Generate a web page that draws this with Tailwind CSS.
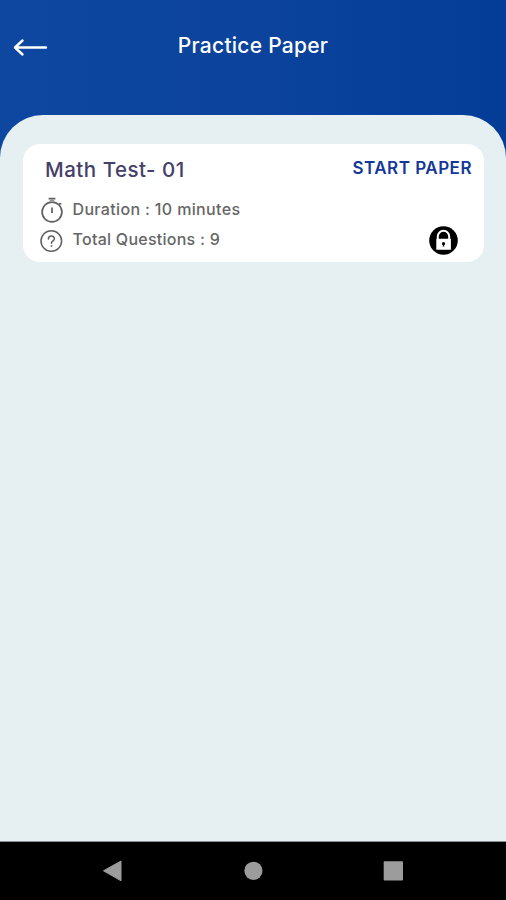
<!DOCTYPE html>
<html lang="en">
<head>
<meta charset="utf-8">
<title>Practice Paper</title>
<script src="https://cdn.jsdelivr.net/npm/@tailwindcss/browser@4"></script>
</head>
<body class="h-[900px] w-[506px] overflow-hidden font-['Inter',sans-serif] font-medium">
<div class="flex h-full flex-col bg-linear-to-r from-[#0e479f] via-[#0b439d] to-[#033d97]">
  <header class="grid h-[115px] shrink-0 grid-cols-[48px_1fr_48px] items-start">
    <svg class="mt-[37px] ml-[12px] h-[21px] w-[36px]" viewBox="0 0 36 21" fill="none" stroke="#fff" stroke-width="2.4" stroke-linecap="round" stroke-linejoin="round"><path d="M3 10.5H34M10.5 3.5L3 10.5L10.5 17.5"/></svg>
    <h1 class="mt-[31px] text-center text-[21px] leading-[30px] tracking-[0.25px] whitespace-nowrap text-white"><span>Practice Paper</span></h1>
  </header>
  <main class="flex-1 rounded-t-[43px] bg-[#e6eff2] pt-[29px] pr-[22px] pl-[23px]">
    <section class="flex h-[118px] justify-between rounded-[17px] bg-white">
      <div class="pl-[17px]">
        <h2 class="mt-[11px] ml-[5px] text-[20.5px] leading-[30px] tracking-[0.5px] whitespace-nowrap text-[#45406a]"><span>Math Test- 01</span></h2>
        <div class="mt-[9px] flex h-[30px] items-center gap-[8.5px] text-[16px] tracking-[0.35px] text-[#666]">
          <svg class="mt-[2px] h-[28px] w-[24px] shrink-0" viewBox="0 0 24 28" fill="none" stroke="#606060" stroke-width="1.7"><circle cx="12" cy="16" r="9.9"/><path d="M8.6 2.6H15.4M12 11.5V17M19 8L21.3 7.6"/><path d="M9.6 4.6H14.4" stroke-width="2" stroke="#999"/></svg>
          <span class="whitespace-nowrap">Duration : 10 minutes</span>
        </div>
        <div class="flex h-[30px] items-center gap-[8.5px] text-[16px] tracking-[0.26px] text-[#666]">
          <svg class="mt-[3px] h-[24px] w-[24px] shrink-0" viewBox="0 0 24 24" fill="none" stroke="#606060" stroke-width="1.5" stroke-linecap="round"><circle cx="11.3" cy="12" r="10.3"/><path d="M8.4 10C8.4 5.9 14.4 6 14.4 9.7C14.4 12 11.4 11.8 11.4 14.3"/><circle cx="11.4" cy="17" r=".5" fill="#606060" stroke-width=".8"/></svg>
          <span class="whitespace-nowrap">Total Questions : 9</span>
        </div>
      </div>
      <div class="flex flex-col items-end pr-[12px]">
        <button class="mt-[10px] text-[17px] leading-[28px] font-semibold tracking-[0.5px] whitespace-nowrap text-[#14379a]"><span>START PAPER</span></button>
        <svg class="mt-[44px] mr-[14px] h-[29px] w-[29px]" viewBox="0 0 29 29"><circle cx="14.5" cy="14.5" r="14.3" fill="#000"/><path d="M8.8 13V10.5A5.7 5.7 0 0 1 20.2 10.5V13" fill="none" stroke="#fff" stroke-width="2"/><rect x="7.3" y="12.8" width="14.6" height="11" rx=".6" fill="#fff"/><circle cx="14.5" cy="17.7" r="1.6"/><path d="M14.5 17L13.6 20.5H15.4Z"/></svg>
      </div>
    </section>
  </main>
  <nav class="flex h-[59px] shrink-0 items-center border-t border-[#8b9090] bg-black">
    <svg class="h-full w-full" viewBox="0 0 506 58" fill="#9c9c9c"><path d="M103.5 28.8L121 19V38.8Z" stroke="#9c9c9c" stroke-linejoin="round"/><circle cx="253.4" cy="28.8" r="9.1"/><rect x="383.7" y="19.3" width="19.3" height="19.3" rx="1"/></svg>
  </nav>
</div>
</body>
</html>
